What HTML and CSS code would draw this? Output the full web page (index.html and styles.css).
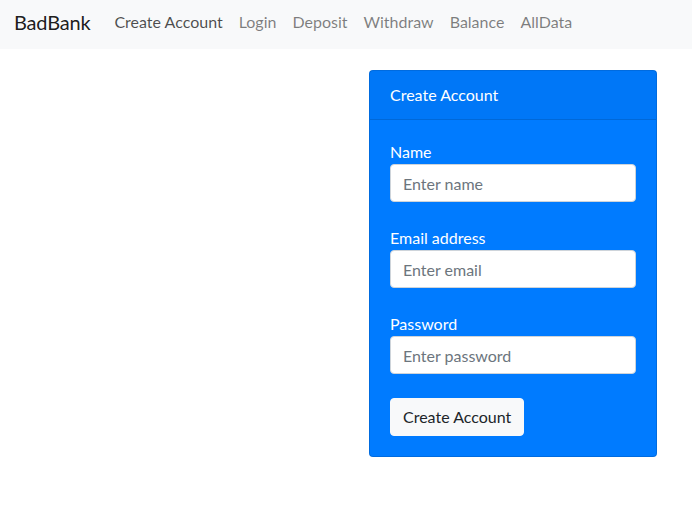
FILE: index.html
```html
<!DOCTYPE html>
<html>
<head>
<meta charset="utf-8">
<link rel="stylesheet" href="styles.css">
</head>
<body>
<nav class="navbar">
  <a class="brand" href="#">BadBank</a>
  <ul class="nav">
    <li><a class="nav-link active" href="#">Create Account</a></li>
    <li><a class="nav-link" href="#">Login</a></li>
    <li><a class="nav-link" href="#">Deposit</a></li>
    <li><a class="nav-link" href="#">Withdraw</a></li>
    <li><a class="nav-link" href="#">Balance</a></li>
    <li><a class="nav-link" href="#">AllData</a></li>
  </ul>
</nav>
<main class="page">
  <div class="card">
    <div class="card-header">Create Account</div>
    <div class="card-body">
      Name<br>
      <input class="form-control" type="input" placeholder="Enter name"><br>
      Email address<br>
      <input class="form-control" type="input" placeholder="Enter email"><br>
      Password<br>
      <input class="form-control" type="password" placeholder="Enter password"><br>
      <button class="btn" type="submit">Create Account</button>
    </div>
  </div>
</main>
</body>
</html>
```
FILE: styles.css
```css
* { box-sizing: border-box; }
html, body { margin: 0; padding: 0; background: #fff; }
body {
  font-family: Lato, "Liberation Sans", sans-serif;
  font-size: 16px;
  line-height: 1.5;
  color: #212529;
}
.navbar {
  display: flex;
  align-items: center;
  height: 49px;
  padding: 0 14px 5px;
  background: #f8f9fa;
}
.brand {
  font-size: 20px;
  color: rgba(0,0,0,.9);
  text-decoration: none;
  margin-right: 16px;
  line-height: 30px;
  letter-spacing: -0.2px;
}
.nav {
  display: flex;
  list-style: none;
  margin: 0;
  padding: 0;
}
.nav-link {
  display: block;
  padding: 8px 8px;
  color: rgba(0,0,0,.5);
  text-decoration: none;
}
.nav-link.active { color: rgba(0,0,0,.7); }
.page {
  padding: 21px 0 0 369px;
}
.card {
  width: 288px;
  background: #007bff;
  color: #fff;
  border: 1px solid rgba(0,0,0,.125);
  border-radius: 4px;
}
.card-header {
  padding: 12px 20px;
  background: rgba(0,0,0,.03);
  border-bottom: 1px solid rgba(0,0,0,.125);
}
.card-body {
  padding: 20px;
}
.form-control {
  display: block;
  width: 100%;
  height: 38px;
  padding: 6px 12px;
  font: inherit;
  color: #495057;
  background: #fff;
  border: 1px solid #ced4da;
  border-radius: 4px;
}
.form-control::placeholder { color: #6c757d; opacity: 1; }
.btn {
  display: inline-block;
  height: 38px;
  padding: 6px 12px;
  font: inherit;
  color: #212529;
  background: #f8f9fa;
  border: 1px solid #f8f9fa;
  border-radius: 4px;
}
```
